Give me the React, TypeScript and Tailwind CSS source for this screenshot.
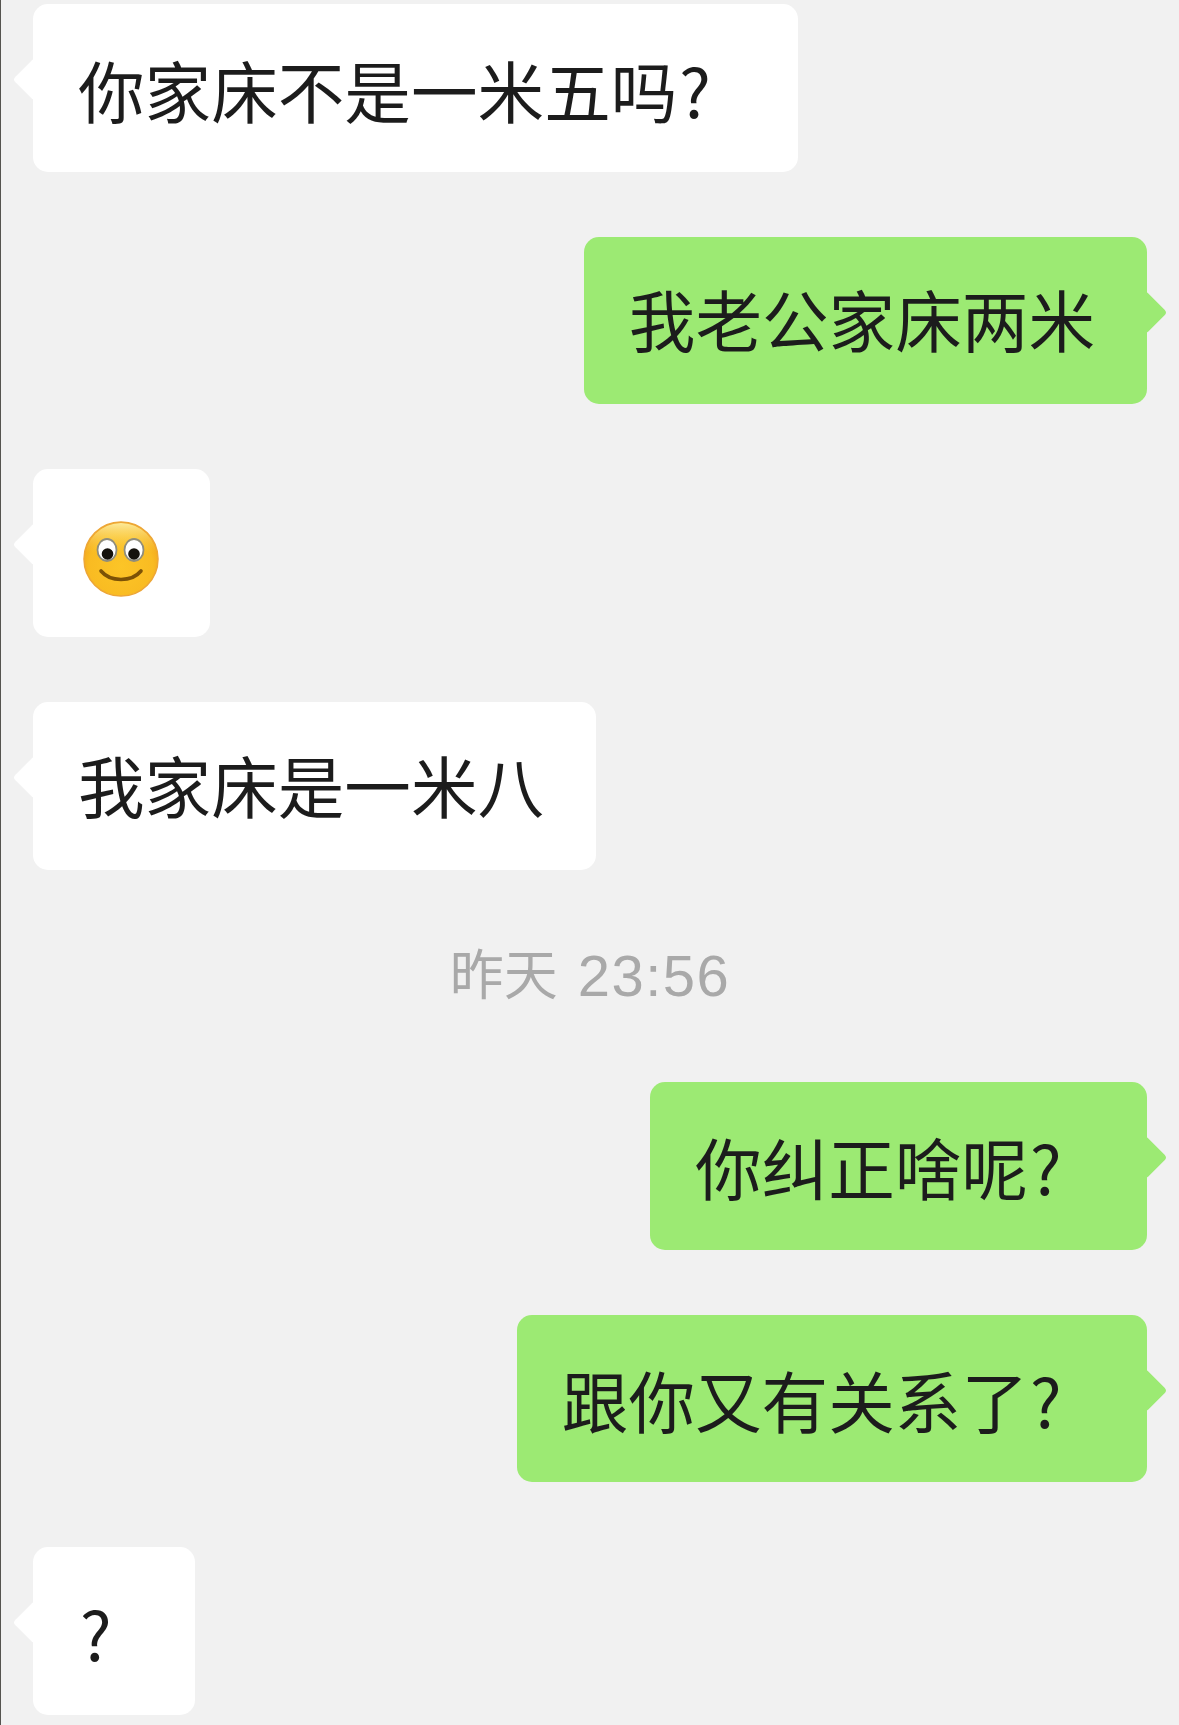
interface BubbleProps {
  mine?: boolean;
  children: React.ReactNode;
}

const Bubble = ({ mine = false, children }: BubbleProps) => (
  <div
    className={`relative flex h-[168px] items-center rounded-[15px] pl-[45px] pr-[52px] pt-[8px] ${
      mine ? "self-end bg-[#9cea73]" : "self-start bg-white"
    }`}
  >
    <span
      className={`absolute top-[60px] h-[31px] w-[31px] rotate-45 rounded-[4px] ${
        mine ? "right-[-14px] bg-[#9cea73]" : "left-[-14px] bg-white"
      }`}
    />
    <span className="relative whitespace-nowrap text-[66.6px] leading-none text-[#1c1c1c]">
      {children}
    </span>
  </div>
);

const Question = ({ className = "w-[67px]" }: { className?: string }) => (
  <span className={`inline-block pl-[2px] font-['Noto_Sans_CJK_SC'] ${className}`}>?</span>
);

const SmileEmoji = () => (
  <svg viewBox="0 0 76 76" className="ml-[5px] block h-[76px] w-[76px] translate-y-[2px]">
    <defs>
      <radialGradient id="face" cx="50%" cy="60%" r="60%">
        <stop offset="0%" stopColor="#fcc527" />
        <stop offset="72%" stopColor="#f9bb22" />
        <stop offset="100%" stopColor="#f0a01c" />
      </radialGradient>
      <linearGradient id="shine" x1="0" y1="0" x2="0" y2="1">
        <stop offset="0%" stopColor="#fdeb9a" />
        <stop offset="42%" stopColor="#fcd244" stopOpacity="0" />
      </linearGradient>
    </defs>
    <circle cx="38" cy="38" r="37" fill="url(#face)" stroke="#eda637" strokeWidth="1.5" />
    <circle cx="38" cy="38" r="36" fill="url(#shine)" />
    <ellipse cx="24" cy="29" rx="9.5" ry="11" fill="#fff" stroke="#8f8d7c" strokeWidth="1.8" />
    <ellipse cx="51" cy="29" rx="9.5" ry="11" fill="#fff" stroke="#8f8d7c" strokeWidth="1.8" />
    <circle cx="24.5" cy="33" r="5.8" fill="#15120c" />
    <circle cx="51" cy="33" r="5.8" fill="#15120c" />
    <path
      d="M18 50c5 6 13 8.500 20 8.500s15-2.500 20-8.500"
      fill="none"
      stroke="#7c5206"
      strokeWidth="3.6"
      strokeLinecap="round"
    />
  </svg>
);

export default function App() {
  return (
    <div
      className="flex h-[1725px] w-[1179px] flex-col gap-[65px] overflow-hidden border-l border-l-[#55544f] bg-[#f1f1f1] pb-[10px] pl-[32px] pr-[32px] pt-[4px]"
      style={{ fontFamily: '"Liberation Sans", "Noto Sans CJK SC", sans-serif' }}
    >
      <Bubble>
        你家床不是一米五吗
        <Question className="w-[69px]" />
      </Bubble>
      <Bubble mine>我老公家床两米</Bubble>
      <Bubble>
        <span className="block w-[80px]">
          <SmileEmoji />
        </span>
      </Bubble>
      <Bubble>我家床是一米八</Bubble>
      <div className="flex h-[82px] items-center justify-center">
        <span className="flex items-center gap-[20px] leading-none text-[#a9a9a9]">
          <span className="text-[54px]">昨天</span>
          <span className="text-[58px] tracking-[1.5px]">23:56</span>
        </span>
      </div>
      <Bubble mine>
        你纠正啥呢
        <Question />
      </Bubble>
      <Bubble mine>
        跟你又有关系了
        <Question />
      </Bubble>
      <Bubble>
        <Question className="w-[65px]" />
      </Bubble>
    </div>
  );
}
